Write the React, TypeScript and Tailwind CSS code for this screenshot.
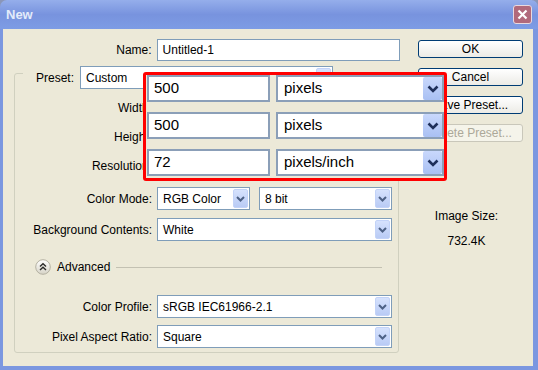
import React from 'react';

const FONT = "font-['Liberation_Sans',Arial,sans-serif]";

function SmallChevron() {
  return (
    <svg width="9" height="6" viewBox="0 0 9 6">
      <path d="M1 1 L4.5 4.5 L8 1" fill="none" stroke="#4D6185" strokeWidth="2" />
    </svg>
  );
}

function BigChevron() {
  return (
    <svg width="12" height="8" viewBox="0 0 12 8">
      <path d="M1.5 1.5 L6 6 L10.5 1.5" fill="none" stroke="#1E2F5A" strokeWidth="2.6" />
    </svg>
  );
}

function Select({ value, className }: { value: string; className: string }) {
  return (
    <div className={`flex h-[23px] items-stretch border border-[#7F9DB9] bg-white ${className}`}>
      <span className="flex flex-1 items-center overflow-hidden whitespace-nowrap pl-[5px] text-[12px] text-black">{value}</span>
      <div className="m-px flex w-[15px] items-center justify-center rounded-[2px] border border-[#C3D3F8] bg-linear-to-b from-[#D6E2FD] to-[#B9CBF5]">
        <SmallChevron />
      </div>
    </div>
  );
}

function Row({ label, children, className }: { label: string; children?: React.ReactNode; className: string }) {
  return (
    <div className={`flex h-[23px] items-center ${className}`}>
      <span className="w-[137px] whitespace-nowrap text-right text-[12px] text-black">{label}</span>
      <div className="ml-[5px] flex items-center">{children}</div>
    </div>
  );
}

function XpButton({ label, disabled }: { label: string; disabled?: boolean }) {
  return (
    <div
      className={`ml-[18px] flex h-[18px] w-[105px] items-center justify-center rounded-[3px] border text-[12px] ${
        disabled
          ? 'border-[#C9C7BA] bg-[#F5F4EA] text-[#ACA899]'
          : 'border-[#003C74] bg-linear-to-b from-white to-[#ECEBE6] text-black'
      }`}
    >
      {label}
    </div>
  );
}

function BigInput({ value }: { value: string }) {
  return (
    <div className="ml-px flex h-[27px] w-[123px] items-center border-2 border-[#8B9FB8] bg-white pl-[5px] text-[15px] text-black">
      {value}
    </div>
  );
}

function BigSelect({ value }: { value: string }) {
  return (
    <div className="ml-[6px] flex h-[27px] w-[168px] items-stretch border-2 border-[#8B9FB8] bg-white">
      <span className="flex flex-1 items-center pl-[6px] text-[15px] text-black">{value}</span>
      <div className="flex w-[19px] items-center justify-center rounded-[2px] bg-linear-to-b from-[#C9D8FC] to-[#A9C0F3]">
        <BigChevron />
      </div>
    </div>
  );
}

export default function App() {
  const overlayRows = [
    { value: '500', unit: 'pixels' },
    { value: '500', unit: 'pixels' },
    { value: '72', unit: 'pixels/inch' },
  ];

  return (
    <div className={`relative h-[370px] w-[538px] overflow-hidden bg-[#8A96B8] ${FONT}`}>
      <div className="flex h-full flex-col">
        {/* Title bar */}
        <div className="flex h-[29px] items-center justify-between rounded-t-[7px] bg-linear-to-b from-[#95AEEB] via-[#7893DE] to-[#7D9CE5] pl-[6px] pr-[6px]">
          <span className="text-[13px] font-bold text-[#E3EBFA]">New</span>
          <div className="flex h-[19px] w-[19px] items-center justify-center rounded-[3px] border border-[#E9D9DF] bg-[#B1697B]">
            <svg width="11" height="11" viewBox="0 0 11 11">
              <path d="M1.5 1.5 L9.5 9.5 M9.5 1.5 L1.5 9.5" stroke="white" strokeWidth="2.2" />
            </svg>
          </div>
        </div>

        {/* Body */}
        <div className="flex flex-1 border-b-4 border-l-[3px] border-r-[5px] border-[#7B97E0] bg-[#ECE9D8]">
          {/* Left form */}
          <div className="flex w-[397px] flex-col">
            <div className="mt-[10px] flex h-[22px] items-center">
              <span className="w-[149px] text-right text-[12px] text-black">Name:</span>
              <div className="ml-[5px] flex h-[22px] w-[244px] items-center border border-[#7F9DB9] bg-white pl-[5px] text-[12px] text-black">
                Untitled-1
              </div>
            </div>

            <div className="ml-[11px] mt-[12px] flex w-[385px] flex-col rounded-[3px] border border-[#D0D0BF] pb-[4px]">
              <div className="-mt-[8px] ml-[8px] flex h-[23px] w-fit items-center bg-[#ECE9D8] pl-[13px] pr-[3px]">
                <span className="w-[44px] text-[12px] text-black">Preset:</span>
                <Select value="Custom" className="w-[253px]" />
              </div>

              {/* these rows sit under the magnified callout */}
              <Row label="Width:" className="mt-[7px]">
                <Select value="" className="w-[93px]" />
              </Row>
              <Row label="Height:" className="mt-[6px]">
                <Select value="" className="w-[93px]" />
              </Row>
              <Row label="Resolution:" className="mt-[6px]">
                <Select value="" className="w-[93px]" />
              </Row>
              <Row label="Color Mode:" className="mt-[10px]">
                <Select value="RGB Color" className="w-[93px]" />
                <Select value="8 bit" className="ml-[9px] w-[133px]" />
              </Row>
              <Row label="Background Contents:" className="mt-[8px]">
                <Select value="White" className="w-[235px]" />
              </Row>

              <div className="ml-[20px] mt-[18px] flex h-[16px] items-center">
                <svg width="16" height="16" viewBox="0 0 16 16">
                  <defs>
                    <linearGradient id="adv" x1="0" y1="0" x2="0" y2="1">
                      <stop offset="0" stopColor="#FFFFFF" />
                      <stop offset="1" stopColor="#D6D3C6" />
                    </linearGradient>
                  </defs>
                  <circle cx="8" cy="8" r="7.3" fill="url(#adv)" stroke="#B4B1A2" strokeWidth="1" />
                  <path d="M5 7.5 L8 4.7 L11 7.5 M5 11 L8 8.2 L11 11" fill="none" stroke="#2A2A2A" strokeWidth="1.4" />
                </svg>
                <span className="ml-[6px] text-[12px] text-black">Advanced</span>
                <div className="ml-[6px] h-px w-[266px] bg-[#C3C1B2]" />
              </div>

              <Row label="Color Profile:" className="mt-[20px]">
                <Select value="sRGB IEC61966-2.1" className="w-[235px]" />
              </Row>
              <Row label="Pixel Aspect Ratio:" className="mt-[7px]">
                <Select value="Square" className="w-[235px]" />
              </Row>
            </div>
          </div>

          {/* Right column */}
          <div className="flex flex-1 flex-col">
            <div className="mt-[11px] flex flex-col gap-[10px]">
              <XpButton label="OK" />
              <XpButton label="Cancel" />
              <XpButton label="Save Preset..." />
              <XpButton label="Delete Preset..." disabled />
            </div>
            <span className="mt-[67px] text-center text-[12px] leading-[14px] text-black">Image Size:</span>
            <span className="mt-[11px] text-center text-[12px] leading-[14px] text-black">732.4K</span>
          </div>
        </div>
      </div>

      {/* Magnified callout */}
      <div className="absolute left-[143px] top-[72px] flex h-[109px] w-[304px] flex-col gap-[10px] rounded-[3px] border-[3px] border-[#FF0000] bg-[#ECE9D8]">
        {overlayRows.map((r, i) => (
          <div key={i} className="flex items-center">
            <BigInput value={r.value} />
            <BigSelect value={r.unit} />
          </div>
        ))}
      </div>
    </div>
  );
}
